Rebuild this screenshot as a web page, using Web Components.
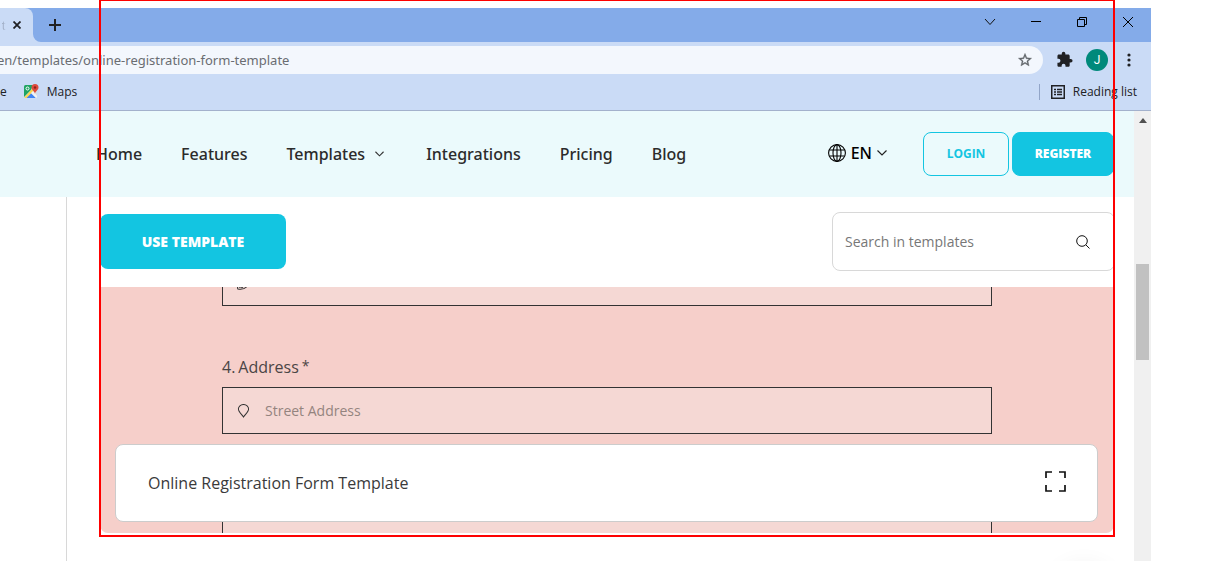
<!DOCTYPE html>
<html lang="en">
<head>
<meta charset="utf-8">
<title>Online Registration Form Template</title>
<style>
  html, body { margin: 0; height: 100%; }
  body { background: #fff; overflow: hidden; font-family: "Open Sans", "Noto Sans", sans-serif; color: #2b2b2b; }
</style>
</head>
<body>
<app-shot>
  <browser-window>
    <site-header slot="page"></site-header>
    <template-view slot="page">
      <form-field label="Phone" number="3." icon="phone" nolabel></form-field>
      <form-field label="Address" number="4." placeholder="Street Address" icon="pin" required></form-field>
      <form-field label="Street Address Line 2" icon="none" nolabel></form-field>
    </template-view>
  </browser-window>
</app-shot>

<script>
const define = (name, html, setup) => {
  const tpl = document.createElement('template');
  tpl.innerHTML = '<style>*{box-sizing:border-box}svg{display:block;flex:none}button,input{font-family:inherit}</style>' + html;
  customElements.define(name, class extends HTMLElement {
    constructor() {
      super();
      this.attachShadow({ mode: 'open' }).append(tpl.content.cloneNode(true));
    }
    connectedCallback() { if (setup) setup(this, this.shadowRoot); }
  });
};

/* Outer stage with the red selection frame laid over the window */
define('app-shot', `
<style>
  :host { display: flex; flex-direction: column; position: relative; min-height: 100vh; padding: 8px 63px 0 0; box-sizing: border-box; }
  .frame { position: absolute; top: -1px; bottom: 24px; left: 99px; right: 99px; border: 2px solid #fe0000; pointer-events: none; z-index: 5; }
</style>
<slot></slot><div class="frame"></div>`);

define('browser-window', `
<style>
  :host { display: flex; flex-direction: column; flex: 1; }
  button { border: 0; background: none; padding: 0; color: inherit; display: grid; place-items: center; }
  .tabs { display: flex; height: 34px; background: #84abe9; color: #202124; }
  .tab { display: flex; align-items: center; gap: 7px; width: 33px; padding-right: 12px; background: #cadbf6; border-radius: 0 8px 0 0; font-size: 12px; justify-content: flex-end; }
  .tab span { color: transparent; background: linear-gradient(90deg, #8a96ab, #cadbf6); -webkit-background-clip: text; background-clip: text; }
  .foot { align-self: flex-end; }
  .plus { width: 28px; }
  .win { margin-left: auto; display: flex; height: 28px; }
  .win button { width: 46px; color: #111; }
  .bar { display: flex; align-items: center; height: 36px; padding: 0 13px 0 0; background: #cadbf6; color: #202124; }
  .pill { flex: 1; display: flex; align-items: center; height: 28px; background: #f3f7fd; border-radius: 0 14px 14px 0; padding-right: 10px; }
  .pill input { flex: 1; border: 0; background: none; padding: 0; margin-left: -3px; font-family: "Noto Sans", sans-serif; font-size: 13px; color: #6a6d72; outline: 0; }
  .tools { display: flex; align-items: center; gap: 12px; padding-left: 13px; }
  .avatar { width: 22px; height: 22px; border-radius: 50%; background: #00897b; color: #fff; font-family: Roboto, sans-serif; font-size: 12px; }
  .marks { display: flex; align-items: center; height: 33px; padding: 0 14px 5px 0; background: #cadbf6; border-bottom: 1px solid #a3b1cc; font-size: 12px; color: #202124; box-sizing: border-box; }
  .marks a { display: flex; align-items: center; gap: 8px; color: inherit; text-decoration: none; }
  .marks a + a { margin-left: 17px; }
  .marks .list { margin-left: auto; border-left: 1px solid #92a5c8; padding-left: 11px; height: 16px; }
  .body { display: flex; flex: 1; }
  .page { flex: 1; min-width: 0; display: flex; flex-direction: column; }
  .scroll { width: 17px; background: #f0f0f0; padding: 7px 2px 0; }
  .scroll svg { margin: 0 auto; }
  .thumb { height: 96px; margin-top: 141px; background: #c1c1c1; }
</style>
<div class="tabs">
  <div class="tab"><span>t</span>
    <button aria-label="Close tab"><svg width="8" height="8" viewBox="0 0 8 8" stroke="#202124" stroke-width="1.8"><path d="M0.5 0.5 7.5 7.5M7.5 0.5 0.5 7.5"/></svg></button></div>
  <svg class="foot" width="8" height="8"><path d="M0 0A8 8 0 0 0 8 8H0Z" fill="#cadbf6"/></svg>
  <button class="plus" aria-label="New tab"><svg width="12" height="12" stroke="#202124" stroke-width="2"><path d="M6 0V12M0 6H12"/></svg></button>
  <div class="win">
    <button aria-label="Search tabs"><svg width="12" height="8" fill="none" stroke="#111"><path d="M1 1 6 6.5 11 1"/></svg></button>
    <button aria-label="Minimize"><svg width="10" height="2"><path d="M0 0H10V1H0Z" fill="#000"/></svg></button>
    <button aria-label="Restore"><svg width="10" height="10" fill="none" stroke="#000"><path d="M0.5 2.5H7.5V9.5H0.5ZM2.5 2.5V0.5H9.5V7.5H7.5"/></svg></button>
    <button aria-label="Close"><svg width="10" height="10" fill="none" stroke="#000"><path d="M0 0 10 10M10 0 0 10"/></svg></button>
  </div>
</div>
<div class="bar">
  <div class="pill"><input aria-label="Address" value="en/templates/online-registration-form-template">
    <button aria-label="Bookmark this page"><svg width="16" height="16" viewBox="0 0 24 24" fill="#5f6368" stroke="#5f6368" stroke-width=".5"><path d="M22 9.24l-7.19-.62L12 2 9.19 8.63 2 9.24l5.46 4.73L5.82 21 12 17.27 18.18 21l-1.63-7.03L22 9.24zM12 15.4l-3.76 2.27 1-4.28-3.32-2.88 4.38-.38L12 6.1l1.71 4.04 4.38.38-3.32 2.88 1 4.28L12 15.4z"/></svg></button>
  </div>
  <div class="tools">
    <button aria-label="Extensions"><svg width="18" height="18" viewBox="0 0 25 25" fill="#202124"><path d="M20.5 11H19V7c0-1.1-.9-2-2-2h-4V3.500a2.500 2.500 0 0 0-5 0V5H4c-1.100 0-1.990.9-1.990 2v3.800H3.500a2.700 2.700 0 0 1 0 5.400H2V20c0 1.100.9 2 2 2h3.800v-1.500a2.700 2.700 0 0 1 5.400 0V22H17c1.100 0 2-.9 2-2v-4h1.500a2.500 2.500 0 0 0 0-5z"/></svg></button>
    <button class="avatar" aria-label="Profile">J</button>
    <button aria-label="Menu"><svg width="18" height="16" fill="#202124"><circle cx="9" cy="3" r="1.6"/><circle cx="9" cy="8" r="1.6"/><circle cx="9" cy="13" r="1.6"/></svg></button>
  </div>
</div>
<div class="marks">
  <a href="#">e</a>
  <a href="#"><svg width="15" height="15" viewBox="0 0 15 15"><defs><clipPath id="c"><rect y="1" width="13" height="13" rx="1.500"/></clipPath></defs><g clip-path="url(#c)"><path d="M0 1H14V14H0Z" fill="#d9dce0"/><path d="M0 1H9L7 6 0 13Z" fill="#1fa463"/><path d="M2 14 7 9 12 14Z" fill="#4285f4"/><path d="M0 14 8 5 9.500 7 2.500 14Z" fill="#fbd64b"/><path d="M7 9 9 7 14 13V14H12Z" fill="#f1f3f4"/></g><circle cx="3.500" cy="4.500" r="1.500" fill="none" stroke="#fff"/><path d="M11 10C11 7 7.500 6.500 7.500 3.500a3.500 3.500 0 0 1 7 0C14.500 6.500 11 7 11 10Z" fill="#dd4b3e"/><circle cx="11" cy="3.500" r="1.200" fill="#8c2218"/></svg>Maps</a>
  <a href="#" class="list"><svg width="14" height="14" fill="none" stroke="#202124"><rect x="0.750" y="0.750" width="12.500" height="12.500" stroke-width="1.500"/><path d="M3 4.500H5M6 4.500H11M3 7H5M6 7H11M3 9.500H5M6 9.500H11" stroke-width="1.400"/></svg>Reading list</a>
</div>
<div class="body">
  <div class="page"><slot name="page"></slot></div>
  <div class="scroll"><svg width="8" height="5"><path d="M0 5 4 0 8 5Z" fill="#505050"/></svg><div class="thumb"></div></div>
</div>`);

define('site-header', `
<style>
  :host { display: flex; align-items: center; height: 86px; padding: 0 20px 0 96px; background: #ebfafc; box-sizing: border-box; }
  nav { display: flex; gap: 39px; font-family: "Noto Sans", sans-serif; font-size: 16px; font-weight: 500; }
  a { color: inherit; text-decoration: none; display: flex; align-items: center; white-space: nowrap; }
  .more { gap: 10px; padding-right: 3px; }
  .right { margin-left: auto; display: flex; align-items: center; }
  .lang { display: flex; align-items: center; gap: 5px; border: 0; background: none; padding: 0 0 3px; margin-right: 36px; font-family: "Noto Sans", sans-serif; font-size: 16px; font-weight: 500; color: #000; }
  .btn { height: 44px; width: 86px; border: 1px solid #13c5e1; border-radius: 8px; background: none; color: #13c5e1; font-size: 12px; font-weight: 700; padding: 0 0 2px; }
  .btn.full { width: 102px; margin-left: 3px; background: #13c5e1; color: #fff; font-weight: 800; }
</style>
<nav>
  <a href="#">Home</a><a href="#">Features</a>
  <a href="#" class="more">Templates <svg width="9" height="6" viewBox="0 0 10 6" fill="none" stroke="#333" stroke-width="1.200"><path d="M0.500 0.500 5 5 9.500 0.500"/></svg></a>
  <a href="#">Integrations</a><a href="#">Pricing</a><a href="#">Blog</a>
</nav>
<div class="right">
  <button class="lang"><svg width="18" height="18" viewBox="0 0 18 18" fill="none" stroke="#000" stroke-width="1.100"><circle cx="9" cy="9" r="8.400"/><ellipse cx="9" cy="9" rx="4" ry="8.400"/><path d="M9 0.500V17.500M1.500 6H16.500M1.500 12H16.500"/></svg>EN<svg width="10" height="6" fill="none" stroke="#222" stroke-width="1.200"><path d="M0.500 0.500 5 5 9.500 0.500"/></svg></button>
  <button class="btn">LOGIN</button><button class="btn full">REGISTER</button>
</div>`);

define('template-view', `
<style>
  :host { display: flex; flex-direction: column; flex: 1; margin-left: 66px; border-left: 1px solid #d8d8d8; padding: 0 20px 0 33px; position: relative; overflow: hidden; }
  .top { display: flex; justify-content: space-between; align-items: center; height: 90px; padding-bottom: 2px; }
  .use { width: 186px; height: 55px; border: 0; border-radius: 8px; background: #13c5e1; color: #fff; font-size: 14px; font-weight: 800; }
  .search { display: flex; align-items: center; width: 283px; height: 59px; margin-right: -1px; padding: 0 24px 0 12px; border: 1px solid #d8d8d8; border-radius: 8px; }
  .search input { flex: 1; min-width: 0; border: 0; padding: 0; font-size: 14px; outline: 0; }
  .search input::placeholder { color: #777; opacity: 1; }
  .search button { border: 0; background: none; padding: 2px 0 0; }
  .panel { position: relative; display: flex; flex-direction: column; height: 246px; padding: 0 122px; background: #f6cfca; border-radius: 0 0 8px 8px; overflow: hidden; }
  ::slotted(form-field:first-child) { margin-top: -28px; }
  ::slotted(form-field:nth-child(2)) { margin-top: 50px; }
  ::slotted(form-field:nth-child(3)) { margin-top: 58px; }
  .card { position: absolute; left: 15px; right: 16px; bottom: 11px; height: 78px; display: flex; align-items: center; justify-content: space-between; padding: 0 31px 0 32px; background: #fff; border: 1px solid #ccc; border-radius: 8px; font-size: 16px; color: #3a3a3a; }
  .card button { border: 0; background: none; padding: 0 0 4px; }
  .chat { position: absolute; right: 20px; bottom: -66px; width: 60px; height: 60px; border-radius: 50%; box-shadow: 0 0 24px rgba(0,0,0,.08); }
</style>
<div class="top">
  <button class="use">USE TEMPLATE</button>
  <div class="search"><input type="text" aria-label="Search in templates" placeholder="Search in templates">
    <button aria-label="Search"><svg width="14" height="14" fill="none" stroke="#111"><circle cx="6" cy="6" r="5.300"/><path d="M9.800 9.800 13.500 13.500"/></svg></button></div>
</div>
<div class="panel"><slot></slot>
  <div class="card"><span>Online Registration Form Template</span>
    <button aria-label="Full screen"><svg width="21" height="21" fill="none" stroke="#111" stroke-width="1.700"><path d="M1 7V1H7M14 1H20V7M20 14V20H14M7 20H1V14"/></svg></button></div>
</div>
<div class="chat"></div>`);

const ICONS = {
  pin: '<path d="M7 14C5 11 1.500 8.200 1.500 5.400a5.500 4.900 0 0 1 11 0C12.500 8.200 9 11 7 14Z"/>',
  phone: '<path d="M0.500 6C0 10 0 12 1 14 5 15 9 13.500 12 10M2 12C6 12 8 11 9 9M5 13 8 10"/>',
  none: ''
};
define('form-field', `
<style>
  :host { display: block; }
  label { display: flex; gap: 3px; font-size: 16px; line-height: 22px; margin-bottom: 9px; color: #4a4545; }
  sup { font-size: 14px; line-height: 20px; }
  [hidden] { display: none; }
  .box { display: flex; align-items: center; gap: 15px; height: 47px; padding: 0 14px; border: 1px solid #333; background: #f5d8d4; }
  input { flex: 1; border: 0; background: none; padding: 0; font-size: 14px; outline: 0; }
  input::placeholder { color: #94847f; opacity: 1; }
</style>
<label for="f"><span class="num"></span><span class="name"></span><sup hidden>*</sup></label>
<div class="box"><svg width="13" height="14" viewBox="0 0 14 15" fill="none" stroke="#333" stroke-width="1.100"></svg><input id="f" type="text"></div>`, (el, root) => {
  const label = root.querySelector('label'), input = root.querySelector('input');
  root.querySelector('.num').textContent = el.getAttribute('number') || '';
  root.querySelector('.name').textContent = el.getAttribute('label');
  root.querySelector('sup').hidden = !el.hasAttribute('required');
  if (el.hasAttribute('nolabel')) { label.hidden = true; label.style.display = 'none'; input.setAttribute('aria-label', el.getAttribute('label')); }
  input.placeholder = el.getAttribute('placeholder') || '';
  root.querySelector('svg').innerHTML = ICONS[el.getAttribute('icon')];
});
</script>
</body>
</html>
